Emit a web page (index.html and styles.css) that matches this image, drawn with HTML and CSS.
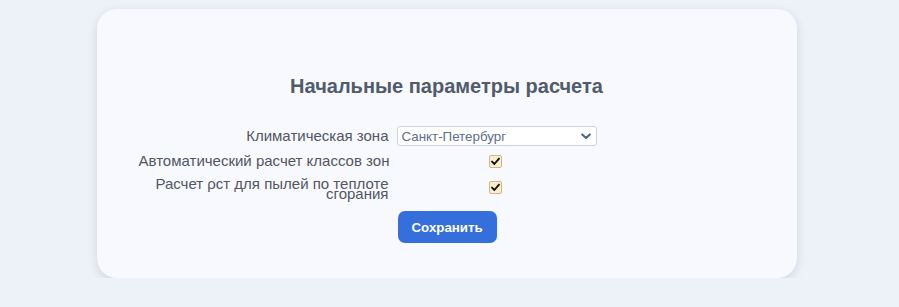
FILE: index.html
```html
<!DOCTYPE html>
<html lang="ru">
<head>
<meta charset="utf-8">
<title>Начальные параметры расчета</title>
<link rel="stylesheet" href="styles.css">
</head>
<body>
<div class="card">
  <h2 class="title">Начальные параметры расчета</h2>
  <form class="form">
    <label class="lbl">Климатическая зона</label>
    <div class="ctrl">
      <div class="select">
        <span class="select-text">Санкт-Петербург</span>
        <svg class="chev" width="10" height="7" viewBox="0 0 10 7"><path d="M1.2 1.4 L5 5 L8.8 1.4" fill="none" stroke="#4e6284" stroke-width="2" stroke-linecap="round" stroke-linejoin="round"/></svg>
      </div>
    </div>
    <label class="lbl">Автоматический расчет классов зон</label>
    <div class="ctrl center">
      <span class="check"><svg width="11" height="11" viewBox="0 0 11 11"><path d="M2 5.6 L4.4 8 L9 2.6" fill="none" stroke="#111" stroke-width="1.9" stroke-linecap="round" stroke-linejoin="round"/></svg></span>
    </div>
    <label class="lbl two">Расчет ρст для пылей по теплоте сгорания</label>
    <div class="ctrl center">
      <span class="check up"><svg width="11" height="11" viewBox="0 0 11 11"><path d="M2 5.6 L4.4 8 L9 2.6" fill="none" stroke="#111" stroke-width="1.9" stroke-linecap="round" stroke-linejoin="round"/></svg></span>
    </div>
    <div></div>
    <div class="ctrl btnrow"><button type="button" class="btn">Сохранить</button></div>
  </form>
</div>
</body>
</html>
```
FILE: styles.css
```css
html, body {
  background: #edf1f8;
}
body {
  margin: 0;
  padding: 9px 6px 0 0;
  font-family: "Liberation Sans", Arial, sans-serif;
}
.card {
  width: 700px;
  margin: 0 auto;
  box-sizing: border-box;
  background: #f8f9fe;
  border-radius: 20px;
  box-shadow: 0 3px 10px rgba(60, 70, 90, 0.16);
  padding: 66px 42px 35px;
}
.title {
  margin: 0 0 28px;
  text-align: center;
  font-size: 20px;
  line-height: 23px;
  font-weight: bold;
  color: #515b6b;
}
.form {
  display: grid;
  grid-template-columns: 250px 200px;
  grid-template-rows: 20px 22px 24px auto;
  column-gap: 8px;
  row-gap: 4px;
  align-items: center;
}
.lbl {
  text-align: right;
  font-size: 15px;
  line-height: 16px;
  color: #51565f;
  white-space: nowrap;
}
.lbl.two {
  white-space: normal;
  line-height: 10px;
  padding-top: 2px;
}
.ctrl {
  display: flex;
  align-items: center;
}
.ctrl.center {
  justify-content: center;
}
.select {
  position: relative;
  width: 200px;
  height: 20px;
  box-sizing: border-box;
  border: 1px solid #cbd3e0;
  border-radius: 3px;
  background: #ffffff;
  display: flex;
  align-items: center;
  padding-left: 4px;
}
.select-text {
  font-size: 13.33px;
  color: #5d6e8c;
}
.chev {
  position: absolute;
  right: 5px;
  top: 6px;
}
.check {
  width: 13px;
  height: 13px;
  box-sizing: border-box;
  border: 1px solid #c8b88c;
  border-radius: 2px;
  background: #fbefcb;
  display: flex;
  align-items: center;
  justify-content: center;
  margin-left: -2px;
}
.check.up {
  margin-top: -1px;
}
.btnrow {
  margin-top: 7px;
  padding-left: 1px;
}
.btn {
  height: 32px;
  padding: 0 14px;
  border: none;
  border-radius: 7px;
  background: #356fdc;
  color: #ffffff;
  font-family: "Liberation Sans", Arial, sans-serif;
  font-size: 13.3px;
  font-weight: bold;
}
```
